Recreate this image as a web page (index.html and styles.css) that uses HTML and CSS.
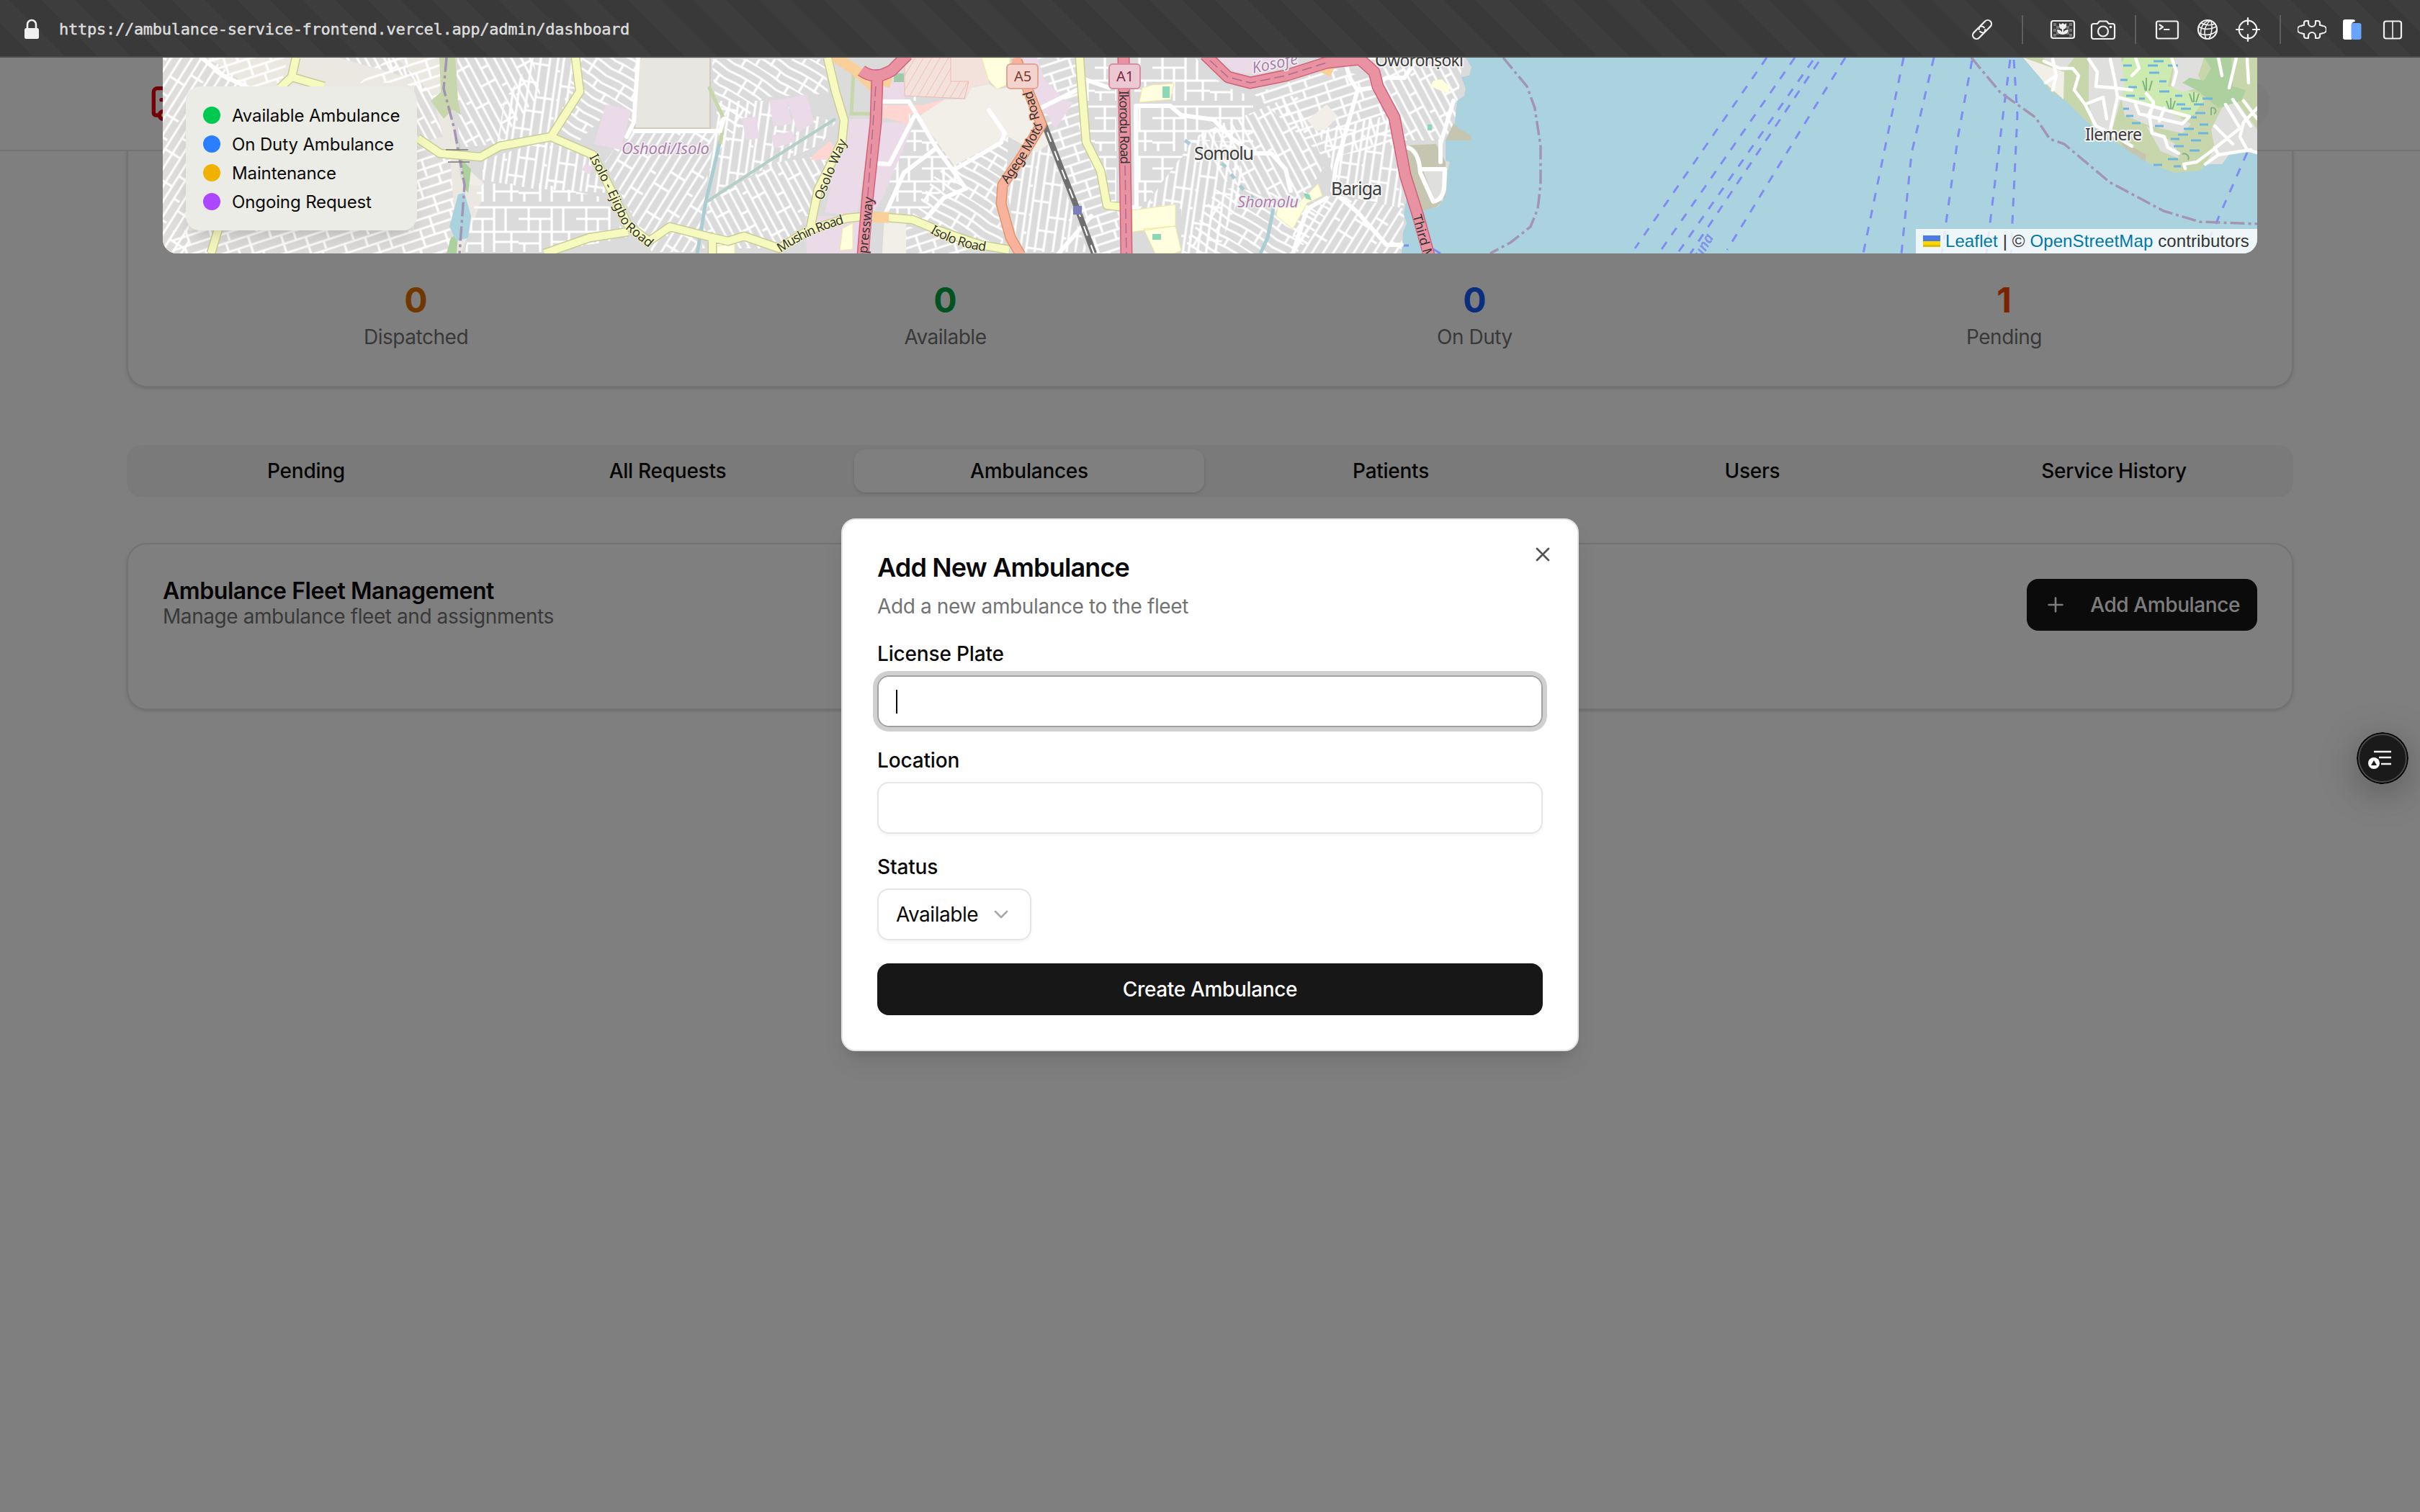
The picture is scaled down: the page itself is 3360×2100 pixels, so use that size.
FILE: index.html
```html
<!DOCTYPE html>
<html lang="en">
<head>
<meta charset="utf-8">
<title>Admin Dashboard</title>
<link rel="stylesheet" href="styles.css">
</head>
<body>
<div class="toolbar">
  <svg class="lock" viewBox="0 0 20 28"><path d="M4 14V8a6 6 0 0 1 12 0v6" fill="none" stroke="#f0f0f0" stroke-width="2.6"/><rect y="13" width="20" height="15" rx="2.5" fill="#f0f0f0"/></svg>
  <span class="url">https://ambulance-service-frontend.vercel.app/admin/dashboard</span>
  <div class="tools">
    <svg class="tool" viewBox="-20 -20 40 40"><g transform="rotate(-45)"><path d="M3 3A5.200 5.200 0 0 1-1 5.200H-11A5.200 5.200 0 0 1-11-5.200H-1A5.200 5.200 0 0 1 4 0"/><path d="M-3-3A5.200 5.200 0 0 1 1-5.200H11A5.200 5.200 0 0 1 11 5.200H1A5.200 5.200 0 0 1-4 0"/></g></svg>
    <i class="sep wide"></i>
    <svg class="tool" viewBox="-20 -20 40 40"><g class="flat" fill="#777"><path d="M-13-9h4v4h-4zM9-9h4v4H9zM-9-5h4v4h-4zM5-5h4v4H5zM-13-1h4v4h-4zM9-1h4v4H9zM-9 3h4v4h-4zM5 3h4v4H5zM-13 6h4v4h-4zM9 6h4v4H9z"/></g><rect x="-16" y="-12" width="32" height="24" rx="3"/><path class="flat" fill="#f0f0f0" d="M-5-9l2.500 2L0-9l2.500 2L5-9v4C5-2 3-.5 1-.2V4C2 1 5 0 8 0 8 4 5 7 0 7S-8 4-8 0c3 0 6 1 7 4V-.2C-3-.5-5-2-5-5z"/></svg>
    <svg class="tool" viewBox="-20 -20 40 40"><path d="M-13-8h5l3-3.500H5L8-8h5a3 3 0 0 1 3 3v15a3 3 0 0 1-3 3h-26a3 3 0 0 1-3-3V-5a3 3 0 0 1 3-3z"/><circle cy="2.500" r="7"/><circle class="flat" cx="10.500" cy="-3.500" r="1.800" fill="#f0f0f0"/></svg>
    <i class="sep"></i>
    <svg class="tool" viewBox="-20 -20 40 40"><rect x="-15" y="-11.500" width="30" height="24" rx="2.500"/><path d="M-10.500-6.500l4.500 3-4.500 3M-4 0h6.500"/></svg>
    <svg class="tool" viewBox="-20 -20 40 40"><circle r="13"/><path d="M4-12.500C-4-6-6 4-2 13M5-12.500C7-3 6 6 2 13M3-12.500C-6-11-11-2-9 9M-12-4C-5 1 5 0 12-4M-12 5C-4 9 8 8 13 1M-9-9C-3-6 5-5 10-8" stroke-width="1.600"/></svg>
    <svg class="tool" viewBox="-20 -20 40 40"><circle r="12.300"/><path d="M0-16v9M0 7v9M-16 0h9M7 0h9"/></svg>
    <i class="sep"></i>
    <svg class="tool" viewBox="-20 -20 40 40"><path d="M-5-12H-8Q-11-12-11-9V-6Q-13-6-15-5A5 5 0 0 0-15 5Q-13 6-11 6V9Q-11 12-8 12H-5V9A4.500 4.500 0 0 1 5 9V12H8Q11 12 11 9V6Q13 6 15 5A5 5 0 0 0 15-5Q13-6 11-6V-9Q11-12 8-12H5V-9A4.500 4.500 0 0 1-5-9Z"/></svg>
    <svg class="tool" viewBox="-20 -20 40 40"><path class="flat" fill="#fff" d="M-10-14H1q3 0 3 3h-1q-4 1-4 5v20h-9q-3 0-3-3v-22q0-3 3-3z"/><rect class="flat" x="-1.500" y="-9" width="14" height="23" rx="3" fill="#66a5fb"/></svg>
    <svg class="tool" viewBox="-20 -20 40 40"><rect x="-12" y="-11.500" width="24" height="24" rx="3"/><path d="M0-11.500v24" stroke-width="1.600"/></svg>
  </div>
</div>

<div class="viewport">
  <header class="site-header">
    <svg class="logo" viewBox="0 0 24 24"><path d="M10 10H6M14 18V6a2 2 0 0 0-2-2H4a2 2 0 0 0-2 2v11a1 1 0 0 0 1 1h2M19 18h2a1 1 0 0 0 1-1v-3.280a1 1 0 0 0-.684-.948l-1.923-.641a1 1 0 0 1-.578-.502l-1.539-3.076A1 1 0 0 0 16.382 8H14M8 8v4M9 18h6"/><circle cx="17" cy="18" r="2"/><circle cx="7" cy="18" r="2"/></svg>
    <span class="avatar"></span>
  </header>

  <main class="content">
    <section class="card overview">
      <div class="map">
        <svg class="map-canvas" viewBox="226 80 2908 272">
          <defs>
            <pattern id="s1" width="62" height="52" patternUnits="userSpaceOnUse" patternTransform="rotate(-18)"><path d="M0 2H62M0 15H62M0 28H62M0 41H62M8 2V15M40 2V28M22 15V41M54 28V54M14 41V54"/></pattern>
            <pattern id="s2" width="56" height="66" patternUnits="userSpaceOnUse" patternTransform="rotate(8)"><path d="M3 0V66M15 0V66M27 0V66M40 0V66M51 0V66M3 10H27M27 30H51M-5 30H3M15 50H40M51 56H59"/></pattern>
            <pattern id="s3" width="70" height="48" patternUnits="userSpaceOnUse" patternTransform="rotate(32)"><path d="M0 3Q35-2 70 3M0 15Q35 10 70 15M0 27Q35 22 70 27M0 39Q35 34 70 39M12 3V15M46 12V39M28 25V48M62 39V52"/></pattern>
            <pattern id="s4" width="64" height="60" patternUnits="userSpaceOnUse" patternTransform="rotate(-58)"><path d="M0 4H64M0 16H64M0 29H64M0 40H64M0 51H64M10 4V29M35 16V40M52 40V64M22 51V64"/></pattern>
            <pattern id="s5" width="58" height="56" patternUnits="userSpaceOnUse" patternTransform="rotate(62)"><path d="M0 4H58M0 15H58M0 27H58M0 38H58M0 48H58M14 4V27M38 27V48M50 4V15M26 48V60"/></pattern>
            <pattern id="s6" width="80" height="70" patternUnits="userSpaceOnUse"><path d="M0 8H80M0 24H46M46 8V70M0 42H80M14 8V42M30 24V70M62 8V42M0 58H30M46 56H80M70 42V78M8 58V78"/></pattern>
            <pattern id="hatch" width="10" height="10" patternUnits="userSpaceOnUse" patternTransform="rotate(30)"><path class="hatch-line" d="M0 0V10"/></pattern>
            <path id="ejigbo" d="M818 218L844 268L866 316L904 347"/>
            <path id="osolo" d="M1142 279Q1158 238 1176 196"/>
            <path id="mushin" d="M1084 351Q1122 324 1180 308"/>
            <path id="isolo" d="M1291 323Q1330 346 1378 350"/>
            <path id="agege" d="M1399 256L1424 220L1447 178L1430 116"/>
          </defs>
          <rect x="226" y="80" width="1830" height="272" fill="#dbdbdb"/>
          <path fill="#ebe8e1" d="M226 80H620L625 150L640 250H670V275L640 352H226Z"/>
          <g class="streets">
            <path fill="#dedddb" d="M226 80H290L345 120L262 150V352H226ZM470 80H550L600 130L615 190L575 200V110ZM575 200L625 215L635 352H240V320H575Z"/>
            <path fill="url(#s4)" d="M226 80H290L345 120L262 150V352H226Z"/>
            <path fill="url(#s1)" d="M280 80H400L390 120H330ZM540 80H612V140L560 115H500Z"/>
            <path fill="url(#s5)" d="M470 80H550L600 130L615 190L575 200V110Z"/>
            <path fill="url(#s1)" d="M575 200L625 215L635 352H240V320H575Z"/>
            <path fill="url(#s5)" d="M635 80H740L750 130L690 200L640 205L632 150Z"/>
            <path fill="url(#s2)" d="M740 80H798L805 127L765 188L690 200L700 140Z"/>
            <path fill="url(#s3)" d="M800 80H885L878 170L850 150L800 200L770 188Z"/>
            <path fill="url(#s6)" d="M665 255H752L840 275L870 330L756 352H645Z"/>
            <path fill="url(#s2)" d="M670 222L765 193L820 216L845 268L740 262L670 250Z"/>
            <path fill="url(#s4)" d="M870 182H995L985 225L970 350H905L860 265L840 225Z"/>
            <path fill="url(#s3)" d="M988 82H1145L1150 130L1060 135L1000 210Z"/>
            <path fill="url(#s2)" d="M1000 140H1070L1160 170L1140 200L1000 262L975 300Z"/>
            <path fill="url(#s5)" d="M980 280L1080 225L1150 215L1125 300L1080 345H975Z"/>
            <path fill="url(#s6)" d="M1235 250L1270 130L1290 150L1340 245L1295 275L1285 310L1232 300Z"/>
            <path fill="url(#s3)" d="M1300 240L1400 190L1392 350L1260 310Z"/>
            <path fill="url(#s1)" d="M1240 310L1330 330L1360 352H1230Z"/>
            <path fill="url(#s2)" d="M1395 250L1450 185L1510 350H1415Z"/>
            <path fill="url(#s1)" d="M1430 80H1498L1508 197L1530 250L1555 290V352H1515L1455 180Z"/>
            <path fill="url(#s6)" d="M1505 80H1550V290H1540L1528 235L1510 195Z"/>
            <path fill="url(#s6)" d="M1575 80H1660L1700 120L1740 135V200L1660 195L1575 300Z"/>
            <path fill="url(#s2)" d="M1580 300L1660 190L1700 170L1730 250L1690 352H1640L1640 290Z"/>
            <path fill="url(#s5)" d="M1660 190L1800 130L1840 230L1800 290L1700 250Z"/>
            <path fill="url(#s3)" d="M1690 260L1800 270L1850 290L1800 352H1640Z"/>
            <path fill="url(#s1)" d="M1740 130L1850 95L1910 110L1940 200L1840 220Z"/>
            <path fill="url(#s2)" d="M1830 180L1930 160L1950 290L1860 270Z"/>
            <path fill="url(#s4)" d="M1800 300L1850 270L1950 290L1946 352H1790Z"/>
            <path fill="url(#s5)" d="M1912 90H2030L2020 170L2005 195H1945L1915 130Z"/>
          </g>
          <!-- land use -->
          <path fill="#c8d7ab" d="M610 80H632L636 140L640 160L628 152L616 165L598 140L612 128Z"/>
          <path fill="#f0ede6" d="M630 160L640 220L650 235L672 255L668 258L646 256Z"/>
          <path fill="#add19e" d="M636 190L642 222L654 235L650 268L645 262ZM626 330L636 325L634 352H620Z"/>
          <path fill="#aad3df" d="M636 270L645 268L654 300L650 330L634 335L624 315Z"/>
          <path fill="#e8e6e0" stroke="#d3cbbd" stroke-width="2" d="M888 80H986V178H881Z"/>
          <path fill="#ebdbe8" d="M841 145L876 153L862 208L825 200ZM812 228L824 232L818 242L808 236ZM1068 140L1092 137L1100 172L1074 176ZM1092 137L1120 131L1130 170L1108 184ZM1030 164L1050 162L1054 192L1036 195ZM1072 188L1100 182L1104 196L1074 206ZM1178 165L1210 165L1190 300L1145 295Z"/>
          <path fill="#ebdbe8" d="M1150 260L1170 200L1195 165L1180 260ZM1225 105H1256V140H1228ZM1118 300H1200V352H1120ZM1222 170H1270L1240 240L1228 270L1210 300V230ZM1420 80H1440L1450 110L1480 140L1490 142L1465 180L1455 160L1440 150ZM1690 80H1800L1750 104L1715 100Z"/>
          <path fill="#ffd6d1" d="M1152 196L1160 206L1150 222H1124L1135 210ZM1226 146H1280L1312 138L1285 158L1262 158V172L1226 163Z"/>
          <path fill="#f3e1db" d="M1256 80H1363L1374 117L1352 120L1339 137L1256 133Z"/>
          <path fill="url(#hatch)" stroke="#f3b7b0" d="M1256 80H1320V113H1345L1339 137L1256 133Z"/>
          <path fill="#f2efe9" d="M1350 121L1374 117L1384 124L1420 118L1456 200L1440 212L1400 190L1325 230L1275 162L1312 138H1340ZM1228 300L1258 304V352H1225Z"/>
          <path fill="#ffffe0" stroke="#f0e9a0" d="M1363 80H1402V116L1384 124L1372 110ZM1586 122L1600 118L1630 116L1625 138L1582 142ZM1572 292L1632 284V314L1588 320L1572 322ZM1588 318L1632 314L1640 348L1630 352H1604ZM1822 263L1830 255L1836 272L1815 282L1795 318L1772 300L1774 288L1800 285ZM1170 317L1184 310V346L1166 348ZM995 342L1020 338V352H995Z"/>
          <path fill="#8ad8b8" d="M1614 120h10v16h-10zM1600 325h12v8h-12zM1810 268l8 2 3 8-8-2zM1982 173h6v8h-6z"/>
          <path fill="#9dcba8" d="M1241 102h14v12h-14z"/>
          <path fill="#f2efe9" d="M1842 145L1858 162L1840 180L1828 182L1815 167Z"/>
          <path fill="#c5c5b0" d="M1952 202L1994 200L2007 225L2007 275L1995 287L1974 294L1960 260Z"/>
          <path fill="#dfdfde" d="M1975 235H2004V280L1992 278Z"/>
          <path fill="#ffffe0" d="M1990 112L2002 110L2014 122L2010 130L1986 120Z"/>
          <!-- streams -->
          <g fill="none" stroke="#aacdd3" stroke-width="5"><path d="M1000 195L980 280L968 352M1768 290L1760 330L1750 352"/><path stroke="#b4cfc8" stroke-width="4" d="M980 281L1070 222L1160 165"/><path d="M1645 195L1700 230L1725 262L1740 275" stroke-dasharray="8 12"/></g>
          <path d="M984 120L1005 165L1000 200M1185 100L1182 158H1212" fill="none" stroke="#c8d7ab" stroke-width="5"/>
          <!-- lagoon -->
          <path fill="#aad3df" d="M2035 80L2043 93L2040 105L2029 107L2035 123L2033 133L2023 140L2020 170L2007 195L2007 223L2013 225L2010 237L2007 273L1997 287L1974 293L1954 270L1949 297L1953 310L1948 323L1946 352H3134V80Z"/>
          <path fill="#c5c5b0" d="M2018 172L2025 178L2041 187L2044 195L2007 195Z"/>
          <!-- east shore -->
          <path fill="#c8d7ab" d="M2809 80L2837 113L2848 127L2866 138L2902 173L2946 203L2987 228L3020 240L3040 238L3054 237L3062 228L3085 227L3096 213L3125 212L3134 210V80Z"/>
          <path fill="#f2efe9" d="M2809 80L2866 100L2865 138L2837 113Z"/>
          <path fill="#cdebb0" d="M2950 80H3020L3010 120L3055 130L3060 140L3045 160L3020 165L2985 145L2940 135L2935 105Z"/>
          <path fill="#dfdfde" d="M2835 80H2880L2866 98ZM2900 80H2945L2950 120L2930 190L2905 175L2900 140ZM3020 80H3060L3052 105L3060 120L3030 128L3014 120ZM2945 135L3010 155L3042 172L3030 185L2985 175L2950 160ZM2980 175L3020 200L3025 220L3000 210ZM3085 150L3105 140L3134 180V210L3096 213L3085 228L3062 228L3075 205L3070 180Z"/>
          <path fill="#add19e" d="M3060 80H3098L3100 120L3118 125L3112 140L3080 150L3050 125L3030 115L3040 108L3060 112L3070 95Z"/>
          <path fill="#c5c5b0" d="M2945 195L2980 215L2978 224L2946 203Z"/>
          <path fill="none" stroke="#6db5e0" stroke-width="3" d="M2990 85h14M2948 91h12M2982 91h14M3010 91h14M2984 101h14M2944 111h10M2998 113h10M2955 121h12M2998 127h14M2952 133h12M3020 133h10M3058 137h14M2970 137h8M3022 145h12M3046 145h14M3028 151h14M2948 151h8M3048 157h14M2952 161h10M3036 163h14M2960 171h12M3054 173h12M2992 175h12M3032 179h14M3052 185h14M3024 187h14M3014 193h12M3042 195h14M3018 203h14M3040 209h14M3010 221h14M2990 229h12M3018 231h10"/>
          <g class="minor"><path d="M2838 85L2860 95L2878 95L2886 105L2880 125L2895 145L2910 175L2925 182L2960 203M2850 82L2855 105L2840 115M2855 105L2850 125M2900 82L2912 100L2910 120L2935 122L2960 125M2930 82L2936 110L2940 135L2930 180L2950 195M2895 145L2920 135L2925 165M2940 135L2980 145L3015 155L3040 162L3030 172L2970 158L2965 145M2980 130L2990 142L2985 160M2990 145L2982 162M3005 150L2998 168M2985 165L2988 185L3005 190L3010 205L3025 213M3015 80L3022 100L3017 118M3080 80L3085 105M3105 80L3095 122M3120 82L3122 115M3134 150L3115 170L3110 190L3120 208L3134 212M3115 140L3134 165M3075 175L3100 200M3090 145L3110 178M3100 138L3125 175M3110 178L3070 210L3050 225L3032 228L3034 234M3075 205L3080 215L3062 228M3080 215L3125 208M2965 80L2970 95L2960 105"/></g>
          <path fill="none" stroke="#7fb583" stroke-width="2" d="M2975 112l4 14M2980 108v18M2988 112l-4 14M3008 140l4 12M3014 136v16M3020 140l-4 12M3040 130l4 12M3046 128v14M3053 130l-4 12M3030 214a6 6 0 0 1 8 8M3070 160v-10a4 4 0 0 1 4 8"/>
          <!-- ferry lines -->
          <g class="ferry"><path d="M2453 80L2270 345M2492 80L2303 352M2517 84L2329 352M2525 86L2347 352M2562 80L2398 347M2643 80L2587 352M2685 80L2654 213L2640 352M2738 84L2719 187L2696 352M2791 83L2781 160L2758 352M2796 83L2801 160L2792 352M3120 212L3068 330M1946 341H1956M1990 346L2000 352"/></g>
          <g class="border"><path d="M2087 80L2120 120L2131 150L2139 203V257L2135 290L2125 315L2097 337L2069 352M2737 80L2777 128L2826 163L2846 193L2866 200L2929 253L3004 293L3054 308L3134 311M620 80L616 123L631 180L645 257L638 352"/></g>
          <!-- minor roads -->
          <g class="minor wide"><path d="M280 80L310 105L345 122M1226 141H1262L1272 158L1300 205L1341 262M1269 162L1235 228L1218 227M1297 208L1255 240L1228 300M1341 262L1310 275L1285 305M1373 153L1395 185L1390 198L1326 235M1560 288H1578L1577 147H1625L1640 160L1685 166L1710 192L1740 213H1765L1785 235L1792 265M1445 150L1495 125M1500 108L1540 122M1910 80L1865 78L1875 110L1885 125L1905 122L1925 108H1950L1965 85M1885 125L1875 160L1855 230L1850 265M1850 265L1885 295L1925 340H1946M1842 275L1815 290L1795 352M1515 300L1470 352M1955 205Q1970 210 1972 240L1990 280Q2002 278 2005 262L2006 235H1972M2018 140L2000 200M2000 195V225M886 80L880 170L870 190M881 182H1000L1005 165"/></g>
          <!-- classified roads -->
          <g class="sec-case"><path d="M799 80L805 127L765 190M580 192L611 213L667 218L694 203L765 190L823 215L850 267L872 313L901 335L930 315L989 330L1011 335L1033 328L1082 345L1122 320L1176 303L1207 300L1267 305L1303 320L1361 340L1401 347M756 352L819 330L872 322M1149 80L1160 127L1172 167L1169 197L1136 263L1125 317M989 333V352M411 80L405 107L389 122M405 107L450 120M303 318L293 352M1499 80L1501 110L1508 197L1528 237L1537 285L1562 288"/></g>
          <g class="sec"><path d="M799 80L805 127L765 190M580 192L611 213L667 218L694 203L765 190L823 215L850 267L872 313L901 335L930 315L989 330L1011 335L1033 328L1082 345L1122 320L1176 303L1207 300L1267 305L1303 320L1361 340L1401 347M756 352L819 330L872 322M1149 80L1160 127L1172 167L1169 197L1136 263L1125 317M989 333V352M411 80L405 107L389 122M405 107L450 120M303 318L293 352M1499 80L1501 110L1508 197L1528 237L1537 285L1562 288"/></g>
          <path d="M619 208H650M622 225H652" stroke="#777" stroke-width="1.500"/>
          <path fill="none" stroke="#707070" stroke-width="8" d="M1412 80L1450 173L1472 230L1497 293L1519 352"/>
          <path fill="none" stroke="#fff" stroke-width="2" stroke-dasharray="14 14" d="M1412 80L1450 173L1472 230L1497 293L1519 352"/>
          <path fill="#7b7fb5" d="M1490 286h12v12h-12z"/>
          <g fill="none" stroke-linejoin="round">
            <path stroke="#e0956a" stroke-width="15" d="M1412 84L1428 127L1446 173L1419 217L1392 257L1390 283L1403 330L1417 354"/>
            <path stroke="#f9b29c" stroke-width="12" d="M1410 80L1428 127L1446 173L1419 217L1392 257L1390 283L1403 330L1417 354"/>
            <path stroke="#fad09a" stroke-width="15" d="M1158 78L1187 97L1200 108L1218 125M1228 120L1232 106M1212 302H1234M1834 92L1850 100"/>
            <path stroke="#d2607c" stroke-width="17" d="M1260 76L1238 98L1218 107L1216 170L1205 270L1198 354M1560 80L1564 354M1673 76L1705 107L1736 115L1785 105L1842 87L1888 82L1908 100L1913 120L1936 163L1951 243L1969 300L1984 354M1196 98Q1215 112 1238 98"/>
            <path stroke="#e892a2" stroke-width="14" d="M1260 76L1238 98L1218 107L1216 170L1205 270L1198 354M1560 80L1564 354M1673 76L1705 107L1736 115L1785 105L1842 87L1888 82L1908 100L1913 120L1936 163L1951 243L1969 300L1984 354M1196 98Q1215 112 1238 98"/>
            <path stroke="#b06a90" stroke-width="1.500" stroke-dasharray="14 6" d="M1216 120L1205 270L1198 354M1562 230L1564 354M1680 84L1705 107L1736 115L1785 105L1842 87"/>
          </g>
          <g class="shield"><rect x="1398" y="89" width="43" height="34" rx="5" fill="#f3d3cb" stroke="#e2a595"/><text x="1408" y="113" fill="#7a3b33">A5</text><rect x="1540" y="89" width="43" height="34" rx="5" fill="#ecc9d2" stroke="#d98ba2"/><text x="1550" y="113" fill="#7a2740">A1</text></g>
          <g class="road-name">
            <text textLength="154"><textPath href="#ejigbo">Isolo - Ejigbo Road</textPath></text>
            <text><textPath href="#osolo">Osolo Way</textPath></text>
            <text textLength="98"><textPath href="#mushin">Mushin Road</textPath></text>
            <text textLength="82"><textPath href="#isolo">Isolo Road</textPath></text>
            <text class="on-primary" textLength="146"><textPath href="#agege">Agege Motor Road</textPath></text>
            <text class="on-trunk" transform="translate(1554 126) rotate(89)" textLength="102">Ikorodu Road</text>
            <text class="on-trunk" transform="translate(1202 372) rotate(-84)">Expressway</text>
            <text class="on-trunk" transform="translate(1961 300) rotate(74)">Third Mainland</text>
          </g>
          <g class="place">
            <text x="1658" y="222" font-size="25" textLength="83">Somolu</text>
            <text x="1848" y="271" font-size="25" textLength="71">Bariga</text>
            <text x="1909" y="92" font-size="23" textLength="123">Oworonṣoki</text>
            <text x="2895" y="195" font-size="23" textLength="79">Ilemere</text>
          </g>
          <g class="district">
            <text x="863" y="214" textLength="122">Oshodi/Isolo</text>
            <text x="1718" y="288" textLength="85">Shomolu</text>
            <text transform="translate(1740 102) rotate(-12)">Kosofe</text>
            <text class="water-name" transform="translate(2362 360) rotate(-60)">una</text>
          </g>
        </svg>
        <div class="legend">
          <div class="legend-row"><i class="dot green"></i><span>Available Ambulance</span></div>
          <div class="legend-row"><i class="dot blue"></i><span>On Duty Ambulance</span></div>
          <div class="legend-row"><i class="dot amber"></i><span>Maintenance</span></div>
          <div class="legend-row"><i class="dot purple"></i><span>Ongoing Request</span></div>
        </div>
        <div class="attribution"><svg class="flag" viewBox="0 0 24 16"><path fill="#4c7be1" d="M0 0h24v8H0z"/><path fill="#ffd500" d="M0 8h24v5H0z"/><path fill="#e0bc00" d="M0 13h24v3H0z"/></svg><span><a>Leaflet</a> | © <a>OpenStreetMap</a> contributors</span></div>
      </div>
      <div class="stats">
        <div class="stat"><b class="amber-text">0</b><span>Dispatched</span></div>
        <div class="stat"><b class="green-text">0</b><span>Available</span></div>
        <div class="stat"><b class="blue-text">0</b><span>On Duty</span></div>
        <div class="stat"><b class="orange-text">1</b><span>Pending</span></div>
      </div>
    </section>

    <nav class="tabs">
      <span class="tab">Pending</span>
      <span class="tab">All Requests</span>
      <span class="tab active">Ambulances</span>
      <span class="tab">Patients</span>
      <span class="tab">Users</span>
      <span class="tab">Service History</span>
    </nav>

    <section class="card fleet">
      <div class="fleet-text">
        <h2>Ambulance Fleet Management</h2>
        <p>Manage ambulance fleet and assignments</p>
      </div>
      <button class="btn add"><svg class="icon" viewBox="0 0 24 24"><path d="M5 12h14M12 5v14"/></svg><span>Add Ambulance</span></button>
    </section>
  </main>

  <div class="overlay"></div>
  <div class="modal-layer">
    <div class="modal">
      <svg class="icon close" viewBox="0 0 24 24"><path d="M18 6L6 18M6 6l12 12"/></svg>
      <div class="modal-head">
        <h3>Add New Ambulance</h3>
        <p>Add a new ambulance to the fleet</p>
      </div>
      <div class="field"><label>License Plate</label><div class="input focused"><i class="caret"></i></div></div>
      <div class="field"><label>Location</label><div class="input"></div></div>
      <div class="field"><label>Status</label><div class="input select"><span>Available</span><svg class="icon chevron" viewBox="0 0 24 24"><path d="M6 9l6 6 6-6"/></svg></div></div>
      <button class="btn">Create Ambulance</button>
    </div>
  </div>
  <svg class="fab" viewBox="-36 -36 72 72"><circle r="36" fill="#000"/><circle r="33" fill="#1a1a1a" stroke="#4a4a4a" stroke-width="2"/><path d="M-12-9H12M-5-1H12M-2 8H12" stroke="#f2f0f0" stroke-width="2.500"/><circle cx="-12" cy="7" r="9.500" fill="#1a1a1a"/><circle cx="-12" cy="7" r="8" fill="#fff"/><path d="M-12 3l4 7h-8z" fill="#1a1a1a"/></svg>
</div>
</body>
</html>
```

FILE: styles.css
```css
* { box-sizing: border-box; margin: 0; }
body { width: 3360px; height: 2100px; overflow: hidden; font-family: Inter, sans-serif; font-size: 28px; line-height: 40px; color: #0a0a0a; background: #fff; }

.toolbar { height: 80px; display: flex; align-items: center; padding: 2px 18px 0 34px; border-bottom: 2px solid #4c4c4c; background: repeating-linear-gradient(45deg, #393939 0 32px, #3d3d3d 32px 64px); }
.lock { width: 20px; height: 28px; margin-right: 28px; }
.url { padding-top: 2px; font-family: "DejaVu Sans Mono", monospace; font-size: 22px; letter-spacing: -.26px; color: #dcdcdc; -webkit-text-stroke: .5px #dcdcdc; }
.tools { margin-left: auto; padding-top: 1px; display: flex; align-items: center; gap: 16px; }
.tool { width: 40px; height: 40px; fill: none; stroke: #f0f0f0; stroke-width: 2.2; stroke-linecap: round; stroke-linejoin: round; }
.tool .flat { stroke: none; }
.sep { width: 2px; height: 40px; margin: 0 7.5px; background: #5e5e5e; }
.sep.wide { margin: 0 19px; }

.viewport { position: relative; height: 2020px; overflow: hidden; }
.site-header { position: absolute; inset: 0 0 auto; z-index: 5; height: 130px; padding: 0 208px; display: flex; align-items: center; justify-content: space-between; background: #fff; border-bottom: 2px solid #e5e5e5; }
.logo { width: 64px; height: 64px; fill: none; stroke: #e7000b; stroke-width: 2; stroke-linecap: round; stroke-linejoin: round; }
.avatar { width: 64px; height: 64px; border-radius: 50%; background: #f7f7f7; }

.content { padding: 0 176px; }
.card { border: 2px solid #e5e5e5; border-radius: 28px; background: #fff; box-shadow: 0 2px 6px rgba(0,0,0,.1), 0 2px 4px -2px rgba(0,0,0,.1); }
.overview { border-top: 0; border-radius: 0 0 28px 28px; padding: 0 48px 48px; }
.map { position: relative; z-index: 20; height: 272px; overflow: hidden; border-radius: 0 0 20px 20px; background: #ddd; }
.map-canvas { display: block; width: 2908px; height: 272px; }
.map-canvas pattern path { fill: none; stroke: #fff; stroke-width: 3.2; }
.map-canvas pattern .hatch-line { stroke: #f0b8b0; stroke-width: 1.5; }
.minor path { fill: none; stroke: #fff; stroke-width: 4.5; stroke-linejoin: round; stroke-linecap: round; }
.minor.wide path { stroke-width: 6; }
.ferry path { fill: none; stroke: #7f8cf3; stroke-width: 3; stroke-dasharray: 12 12; }
.border path { fill: none; stroke: #a394b4; stroke-width: 3.5; stroke-dasharray: 20 5 4 5; }
.sec-case path { fill: none; stroke: #c9cc98; stroke-width: 13; stroke-linejoin: round; }
.sec path { fill: none; stroke: #f7fabf; stroke-width: 10; stroke-linejoin: round; }
.map-canvas text { font-family: "Noto Sans", sans-serif; paint-order: stroke; stroke-linejoin: round; }
.shield rect { stroke-width: 2; }
.shield text { font-size: 20px; }
.road-name text { font-size: 18px; fill: #333; stroke: #f7fabf; stroke-width: 2px; }
.road-name .on-primary { stroke: #f9b29c; }
.road-name .on-trunk { stroke: #e892a2; }
.place text { fill: #3c3c3c; stroke: #f4f4f4; stroke-width: 4px; }
.district text { font-size: 22px; font-style: italic; fill: #ab82ab; stroke: #f4f0f4; stroke-width: 3px; }
.district .water-name { font-size: 20px; font-weight: 600; fill: #8391ee; stroke: none; }

.legend { position: absolute; left: 32px; top: 40px; width: 321px; padding: 25px 24px 23px; display: grid; gap: 8px; border-radius: 20px; background: rgba(235,236,230,.98); box-shadow: 0 20px 30px -6px rgba(0,0,0,.1), 0 8px 12px -8px rgba(0,0,0,.1); }
.legend-row { display: flex; align-items: center; gap: 16px; font-size: 24px; line-height: 32px; letter-spacing: -.12px; white-space: nowrap; }
.dot { width: 24px; height: 24px; border-radius: 50%; position: relative; top: -1px; }
.green { background: #00c950; }
.blue { background: #2b7fff; }
.amber { background: #f0b100; }
.purple { background: #ad46ff; }
.attribution { position: absolute; right: 0; bottom: 0; height: 34px; padding: 0 11px 0 10px; display: flex; align-items: center; gap: 7px; font: 24px/34px "Liberation Sans", sans-serif; letter-spacing: .12px; color: #333; background: rgba(255,255,255,.8); white-space: nowrap; }
.attribution a { color: #0078a8; }
.flag { width: 24px; height: 16px; }

.stats { display: grid; grid-template-columns: repeat(4, 1fr); gap: 32px; padding: 33px 0 0; height: 136px; }
.stat { display: flex; flex-direction: column; align-items: center; color: #737373; letter-spacing: -.46px; }
.stat b { font-size: 48px; line-height: 63px; letter-spacing: 0; }
.amber-text { color: #e17100; }
.green-text { color: #00a63e; }
.blue-text { color: #155dfc; }
.orange-text { color: #f54900; }

.tabs { margin-top: 80px; height: 72px; padding: 6px; display: grid; grid-template-columns: repeat(6, 1fr); gap: 16px; border-radius: 20px; background: #f5f5f5; }
.tab { display: flex; align-items: center; justify-content: center; border-radius: 16px; font-weight: 500; letter-spacing: -.26px; }
.tab.active { background: #fff; box-shadow: 0 2px 6px rgba(0,0,0,.1), 0 2px 4px -2px rgba(0,0,0,.1); }

.fleet { margin-top: 64px; height: 232px; padding: 48px; display: flex; justify-content: space-between; align-items: flex-start; }
h2 { padding-top: 1px; font-size: 32px; line-height: 31px; font-weight: 600; letter-spacing: -.44px; }
.fleet p { letter-spacing: -.42px; }
.fleet p, .modal p { color: #737373; }
.btn { height: 72px; display: flex; align-items: center; justify-content: center; border: 0; border-radius: 16px; background: #171717; color: #fafafa; font: 500 28px/40px Inter, sans-serif; letter-spacing: -.34px; white-space: nowrap; }
.btn.add { padding: 0 24px; gap: 32px; letter-spacing: -.4px; }
.icon { width: 32px; height: 32px; fill: none; stroke: currentColor; stroke-width: 2; stroke-linecap: round; stroke-linejoin: round; }

.overlay { position: absolute; inset: 0; z-index: 10; background: rgba(0,0,0,.5); }
.modal-layer { position: absolute; inset: 0; z-index: 30; display: flex; justify-content: center; align-items: flex-start; padding-top: 640px; }
.modal { position: relative; width: 1024px; padding: 48px; display: grid; gap: 32px; border: 2px solid #e5e5e5; border-radius: 20px; background: #fff; box-shadow: 0 20px 30px -6px rgba(0,0,0,.1), 0 8px 12px -8px rgba(0,0,0,.1); }
.modal p { letter-spacing: -.37px; }
.close { position: absolute; top: 32px; right: 32px; opacity: .7; }
.modal-head { display: grid; gap: 16px; }
h3 { font-size: 36px; line-height: 36px; font-weight: 600; letter-spacing: -.85px; }
.field { display: grid; gap: 16px; justify-items: start; }
label { line-height: 28px; font-weight: 500; letter-spacing: -.16px; }
.input { width: 100%; height: 72px; padding: 0 24px; display: flex; align-items: center; border: 2px solid #e5e5e5; border-radius: 16px; box-shadow: 0 2px 4px rgba(0,0,0,.05); }
.input.focused { border-color: #a1a1a1; box-shadow: 0 0 0 6px #d0d0d0; }
.caret { width: 2px; height: 33px; background: #0a0a0a; }
.select { width: 214px; justify-content: space-between; letter-spacing: -.46px; }
.chevron { opacity: .35; }
.fab { position: absolute; z-index: 40; left: 3272px; top: 937px; width: 72px; height: 72px; border-radius: 50%; box-shadow: 0 10px 60px rgba(0,0,0,.2), 0 16px 40px rgba(0,0,0,.1); }
```
